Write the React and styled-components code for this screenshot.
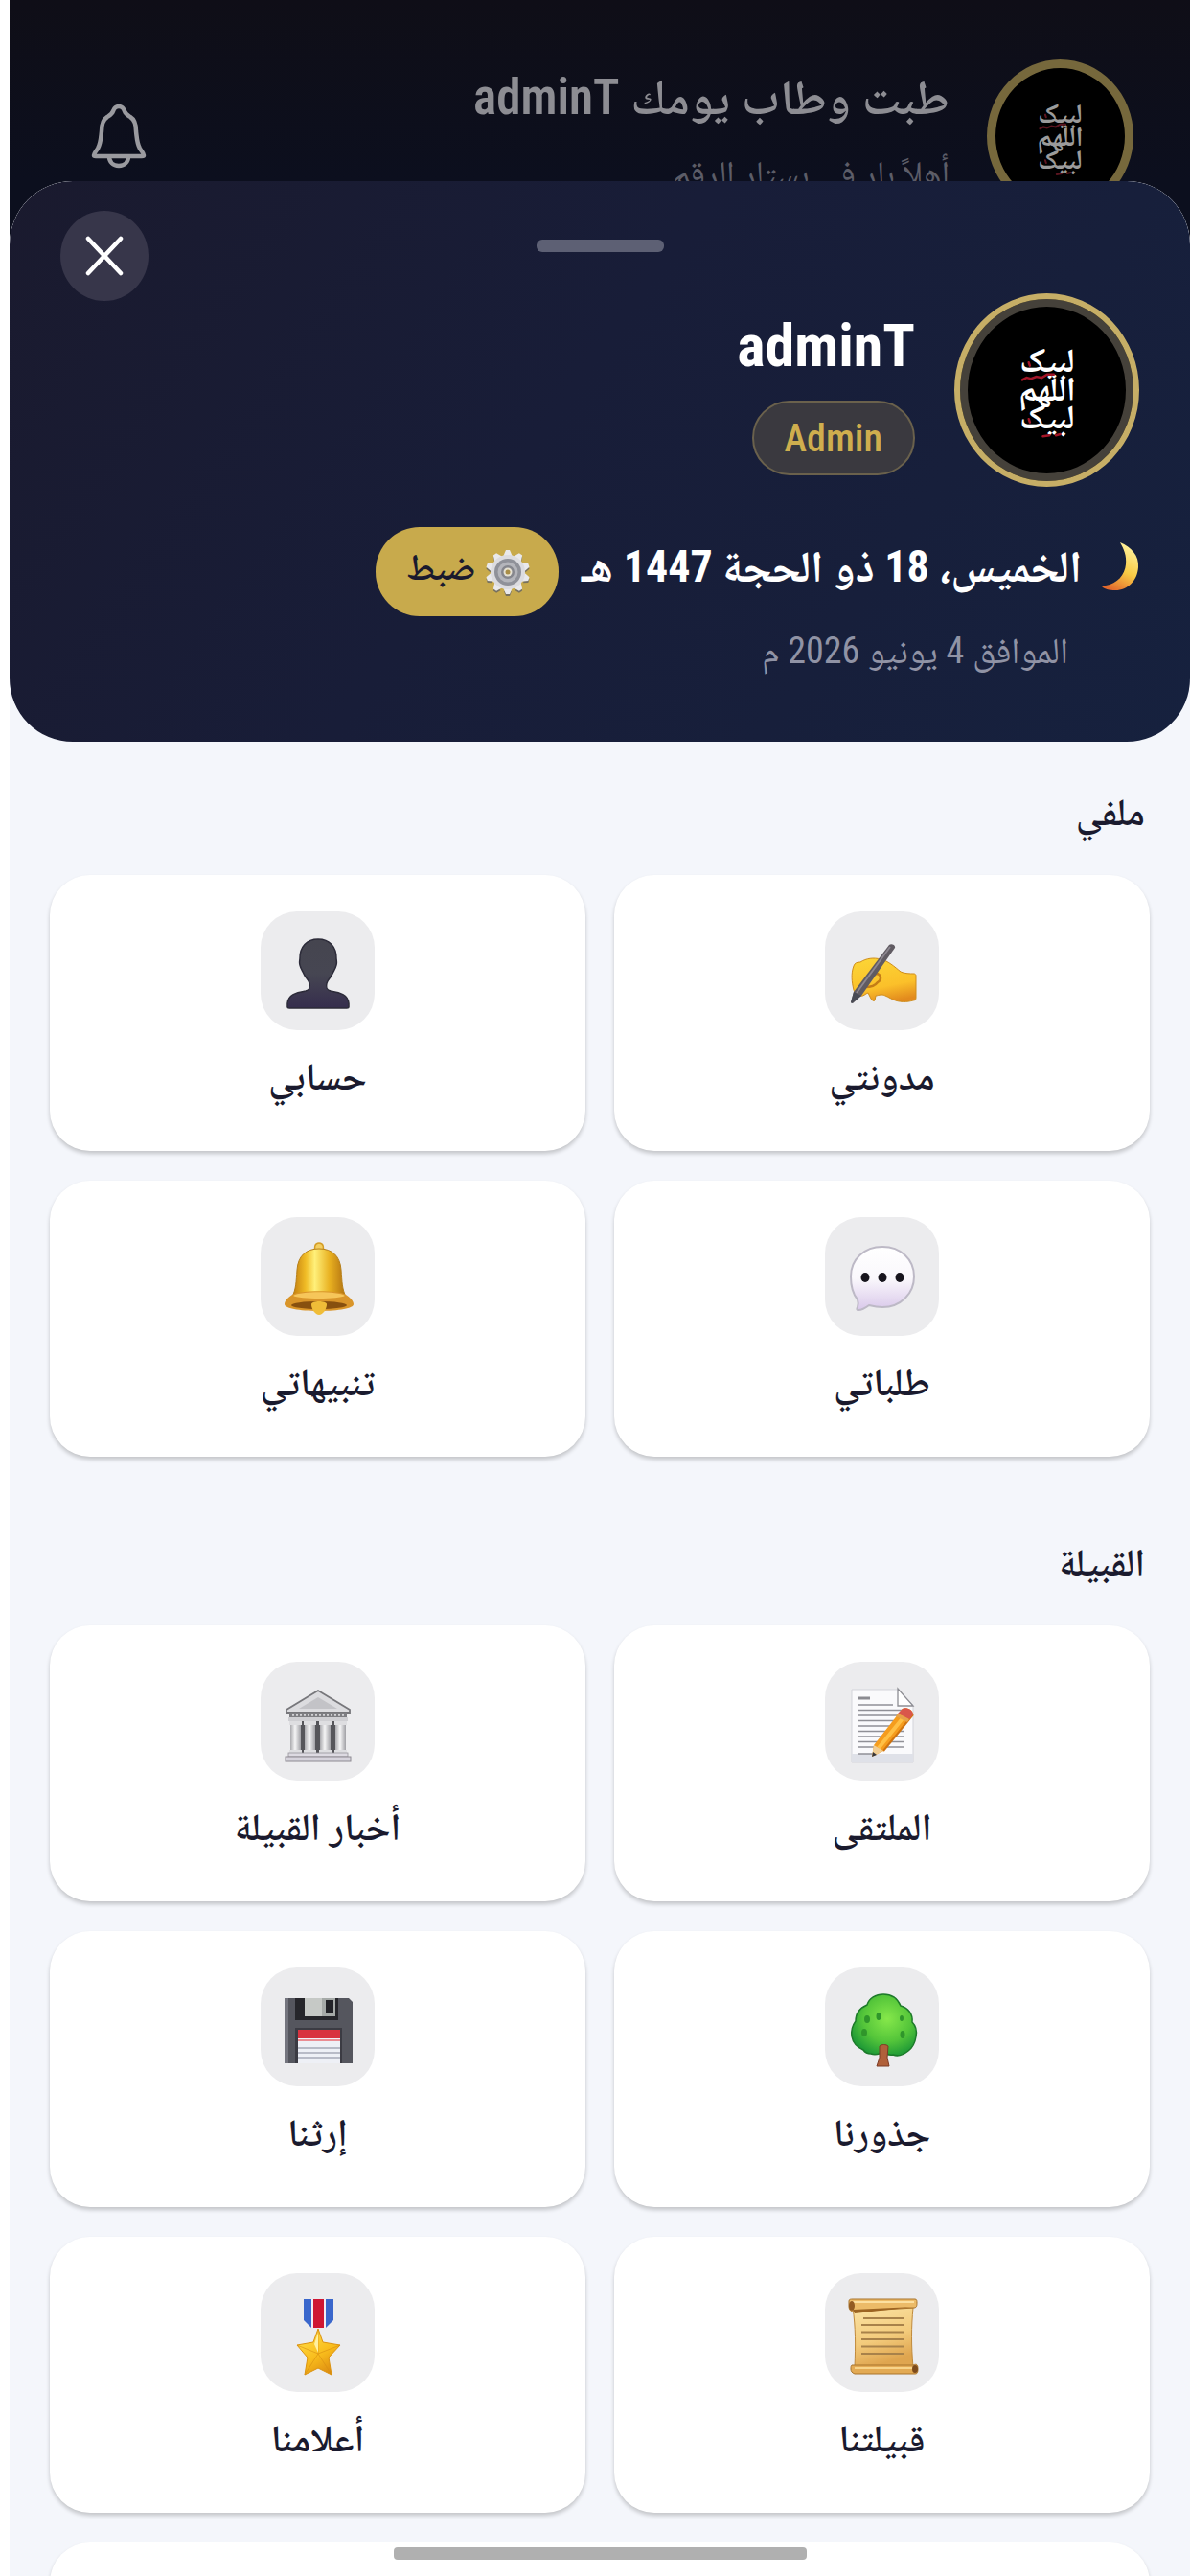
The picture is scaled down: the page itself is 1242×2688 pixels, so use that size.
import React from 'react';
import styled, { createGlobalStyle } from 'styled-components';

const GlobalStyle = createGlobalStyle`
  *, *::before, *::after { box-sizing: border-box; }
  body { margin: 0; background: #ffffff; }
  button { font: inherit; border: 0; padding: 0; cursor: pointer; }
  h1, h2, p { margin: 0; font-weight: inherit; }
  svg { display: block; flex: none; overflow: visible; }
`;

const Page = styled.main`
  height: 100vh;
  overflow: hidden;
  padding-left: 10px;
  display: flex;
  flex-direction: column;
  font-family: 'Roboto Condensed', 'Noto Naskh Arabic', 'Noto Sans', 'DejaVu Sans', sans-serif;
  color: #1a1a2e;
`;

const AppBar = styled.header`
  flex: none;
  height: 270px;
  padding: 62px 59px 0 86px;
  display: flex;
  align-items: flex-start;
  gap: 39px;
  background: linear-gradient(#0f0e17, #0c0f1e 70%);
  color: #8d8d93;
`;

const Greeting = styled.div`
  flex: 1;
  display: flex;
  flex-direction: column;
  gap: 9px;
`;

const GreetingTitle = styled.p`
  font-size: 51px;
  font-weight: 600;
  line-height: 80px;
`;

const GreetingText = styled.p`
  font-size: 36px;
  line-height: 60px;
  color: #5c5d68;
`;

const BellButton = styled.button`
  margin-top: 46px;
  background: none;
  color: #9a9a9f;
`;

const Avatar = styled.div`
  flex: none;
  width: ${(p) => (p.$large ? 193 : 153)}px;
  height: ${(p) => (p.$large ? 202 : 160)}px;
  border-radius: 50%;
  border: ${(p) => (p.$large ? '6px solid #c6ae66' : '9px solid #76683c')};
  box-shadow: ${(p) => (p.$large ? 'inset 0 0 0 8px #45413a' : 'none')};
  background: #000000;
  display: grid;
  place-items: center;
`;

const Sheet = styled.section`
  flex: 1;
  min-height: 0;
  margin-top: -81px;
  border-radius: 66px 66px 0 0;
  background: #f4f6fb;
  overflow: hidden;
`;

const Hero = styled.div`
  position: relative;
  padding: 61px 53px 64px;
  border-radius: 66px;
  background: linear-gradient(125deg, #1a1a2e, #181d38 45%, #16213e);
  color: #ffffff;
`;

const Handle = styled.div`
  width: 133px;
  height: 13px;
  margin: 0 auto 43px;
  border-radius: 6px;
  background: #5d6074;
`;

const CloseButton = styled.button`
  position: absolute;
  left: 53px;
  top: 31px;
  width: 92px;
  height: 94px;
  border-radius: 50%;
  background: #37364a;
  display: grid;
  place-items: center;
`;

const Profile = styled.div`
  display: flex;
  align-items: center;
  gap: 41px;
`;

const Identity = styled.div`
  display: flex;
  flex-direction: column;
  align-items: flex-start;
  gap: 14px;
`;

const UserName = styled.h1`
  font-size: 62px;
  font-weight: 700;
  line-height: 86px;
`;

const RoleBadge = styled.span`
  height: 78px;
  padding: 0 32px;
  border: 2px solid #6a614c;
  border-radius: 39px;
  background: #3a393f;
  color: #cfae4e;
  font-size: 40px;
  font-weight: 500;
  line-height: 76px;
`;

const DateRow = styled.div`
  margin-top: 42px;
  display: flex;
  align-items: center;
  gap: 24px;
`;

const HijriDate = styled.p`
  padding-bottom: 12px;
  display: flex;
  align-items: center;
  gap: 19px;
  font-size: 46px;
  font-weight: 700;
  line-height: 80px;
`;

const AdjustButton = styled.button`
  height: 93px;
  padding: 0 32px;
  border-radius: 46px;
  background: #c8aa4c;
  color: #1a1a2e;
  display: flex;
  align-items: center;
  gap: 12px;
  font-size: 38px;
  font-weight: 600;
  line-height: 56px;
`;

const AdjustLabel = styled.span`
  padding-bottom: 10px;
`;

const GregorianDate = styled.p`
  margin-top: 8px;
  padding-right: 74px;
  padding-bottom: 3px;
  font-size: 38px;
  line-height: 56px;
  color: #9093a5;
`;

const Section = styled.section`
  padding: ${(p) => (p.$first ? 46 : 83)}px 42px 0;
`;

const SectionTitle = styled.h2`
  padding-right: 5px;
  margin-bottom: 37px;
  font-size: 40px;
  font-weight: 600;
  line-height: 56px;
`;

const CardGrid = styled.div`
  display: grid;
  grid-template-columns: 1fr 1fr;
  gap: 31px 30px;
`;

const Card = styled.button`
  grid-column: ${(p) => (p.$wide ? '1 / -1' : 'auto')};
  min-height: 288px;
  padding: 38px 20px 49px;
  border-radius: 42px;
  background: #ffffff;
  box-shadow: 0 3px 4px rgba(0, 0, 0, 0.2);
  color: #1a1a2e;
  display: flex;
  flex-direction: column;
  align-items: center;
  gap: 21px;
  font-size: 40px;
  font-weight: 600;
  line-height: 56px;
`;

const Tile = styled.span`
  width: 119px;
  height: 124px;
  border-radius: 38px;
  background: #ececee;
  display: grid;
  place-items: center;
`;

const HomeIndicator = styled.div`
  position: fixed;
  left: 50%;
  bottom: 17px;
  width: 431px;
  height: 13px;
  margin-left: -210px;
  border-radius: 4px;
  background: #b0b0b0;
`;

const EmblemText = styled.text`
  font-family: 'Noto Naskh Arabic', 'DejaVu Sans', sans-serif;
  font-size: 31px;
  font-weight: 700;
  text-anchor: middle;
`;

function Emblem({ width, color, accent }) {
  return (
    <svg width={width} height={width * 1.4} viewBox="0 0 60 84" fill={color} aria-hidden="true">
      <EmblemText x="30" y="26">لبيک</EmblemText>
      <EmblemText x="30" y="52">اللهم</EmblemText>
      <EmblemText x="30" y="78">لبيک</EmblemText>
      <path d="M7 33l4-2 4 1 5-2 5 1 5-3 6 0M26 85l6-1M38 84l4-1M13 17l1 3M13 69l1 3" fill="none" stroke={accent} strokeWidth="2.200" strokeLinecap="round" />
    </svg>
  );
}

function BellOutline() {
  return (
    <svg width="56" height="67" viewBox="0 0 56 67" fill="none" stroke="currentColor" strokeWidth="4.500" strokeLinejoin="round" aria-hidden="true">
      <path d="M28 3c-3 0-5 2-6 5-1 3-3 4-6 6-5 3-6 8-6 15-1 9-1 13-4 18-2 3-4 5-4 7 0 1 1 1 2 1h48c1 0 2 0 2-1 0-2-2-4-4-7-3-5-3-9-4-18 0-7-1-12-6-15-3-2-5-3-6-6-1-3-3-5-6-5z" />
      <path d="M18 55c0 6 4 10 10 10s10-4 10-10" />
    </svg>
  );
}

function CloseIcon() {
  return (
    <svg width="38" height="40" viewBox="0 0 38 40" stroke="#ffffff" strokeWidth="4.500" strokeLinecap="round" aria-hidden="true">
      <path d="M2 2l34 36M36 2L2 38" />
    </svg>
  );
}

function Moon() {
  return (
    <svg width="41" height="52" viewBox="1 0 41 52" aria-hidden="true">
      <defs>
        <linearGradient id="moon" x1="0.7" y1="0" x2="0.3" y2="1">
          <stop offset="0" stopColor="#fff3a0" />
          <stop offset="0.55" stopColor="#f9cb45" />
          <stop offset="1" stopColor="#e2682c" />
        </linearGradient>
      </defs>
      <path d="M22 1c12 5 20 14 19 26-1 14-11 24-24 24-6 0-12-1-15-5 1 0 3 0 5 0 12-2 20-11 21-22 1-9-2-16-6-23z" fill="url(#moon)" />
    </svg>
  );
}

const gearTeeth = Array.from({ length: 10 }, (_, i) => i * 36);

function Gear() {
  return (
    <svg width="42" height="48" viewBox="0 0 42 48" aria-hidden="true">
      {gearTeeth.map((a) => (
        <path key={`s${a}`} d="M17 6l2-5h4l2 5z" fill="#77715f" transform={`translate(0 2) rotate(${a} 21 24)`} />
      ))}
      {gearTeeth.map((a) => (
        <path key={a} d="M16 8l3-7h4l3 7z" fill="#e9e9ec" transform={`rotate(${a} 21 24)`} />
      ))}
      <circle cx="21" cy="24" r="18" fill="#dcdce0" />
      <circle cx="21" cy="24" r="14" fill="#8f9199" />
      <circle cx="21" cy="24" r="10.500" fill="#b4b5bb" />
      <circle cx="21" cy="24" r="7" fill="#85868d" />
      <circle cx="21" cy="24" r="4.500" fill="#e6e1d2" />
      <circle cx="21" cy="24" r="2.500" fill="#a98e48" />
    </svg>
  );
}

function Glyph({ children }) {
  return (
    <svg width="80" height="88" viewBox="0 -4 80 88" aria-hidden="true">
      {children}
    </svg>
  );
}

const icons = {
  person: (
    <Glyph>
      <defs>
        <linearGradient id="bust" x1="0" y1="0" x2="0" y2="1">
          <stop offset="0" stopColor="#45454f" />
          <stop offset="0.5" stopColor="#464652" />
          <stop offset="1" stopColor="#352d4d" />
        </linearGradient>
      </defs>
      <path d="M40 7c12 0 19 8 19 20 0 2 1 4 0 7-1 4-2 5-4 9-2 5-5 6-6 10-1 5 0 7 4 8 11 2 18 4 19 13 0 2 0 3 0 4 0 1-1 1-2 1H10c-1 0-2 0-2-1 0-1 0-2 0-4 1-9 8-11 19-13 4-1 5-3 4-8-1-4-4-5-6-10-2-4-3-5-4-9-1-3 0-5 0-7C21 15 28 7 40 7z" fill="url(#bust)" stroke="#2c2b39" strokeWidth="1.500" />
    </Glyph>
  ),
  writing: (
    <Glyph>
      <defs>
        <linearGradient id="hand" x1="0.3" y1="0" x2="0.6" y2="1">
          <stop offset="0" stopColor="#fcd435" />
          <stop offset="0.65" stopColor="#fbc02a" />
          <stop offset="1" stopColor="#e28a1d" />
        </linearGradient>
      </defs>
      <path d="M10 35c1-3 3-4 7-4 6-4 14-5 21-3 7 1 15 8 21 13 4 2 10 2 14 2 1 0 2 1 2 2v23c0 2-1 3-3 3-6 2-15 2-21-1-6-3-9-5-12-5-3 0-4 1-6 1l-1 5c-1 1-3 0-4-2l-3-6c-3 1-5 4-8 3-4-1-6-3-7-6-2-8-3-17 0-25z" fill="url(#hand)" stroke="#cf8d1c" strokeWidth="1" />
      <path d="M22 57c5 0 10-1 13-5 4-2 4-7 0-9l-6 1" fill="none" stroke="#c47d16" strokeWidth="2.500" strokeLinecap="round" />
      <path d="M47 13c2-2 7 0 6 3L18 66l-9 8-2-1 3-11z" fill="#605b62" />
      <path d="M48 15L13 63" stroke="#8d8790" strokeWidth="1.800" />
      <path d="M10 62l8 4-10 8-1-1z" fill="#484a54" />
    </Glyph>
  ),
  bell: (
    <Glyph>
      <defs>
        <linearGradient id="brass" x1="0" y1="0" x2="1" y2="0">
          <stop offset="0" stopColor="#c07a0e" />
          <stop offset="0.250" stopColor="#f0bc26" />
          <stop offset="0.420" stopColor="#fff07a" />
          <stop offset="0.700" stopColor="#e8b020" />
          <stop offset="1" stopColor="#b06f10" />
        </linearGradient>
      </defs>
      <path d="M37 15c-1-5-1-10 4-10s5 5 4 10z" fill="#f3cf62" stroke="#d49d27" strokeWidth="1.500" />
      <path d="M41 11c14 0 22 8 23 22 1 13 1 20 5 28H13c4-8 4-15 5-28 1-14 9-22 23-22z" fill="url(#brass)" stroke="#b7801a" strokeWidth="1" />
      <path d="M13 59c8-5 48-5 56 0 5 3 8 7 8 10 0 4-15 7-36 7S5 73 5 69c0-3 3-7 8-10z" fill="#d9952a" />
      <path d="M14 60c8-5 46-5 54 0-6 4-48 4-54 0z" fill="#f6c65a" />
      <ellipse cx="41" cy="70" rx="29" ry="4" fill="#87500f" />
      <path d="M33 69c0-4 16-4 16 0 0 5-4 11-8 11s-8-6-8-11z" fill="#f0bd38" />
    </Glyph>
  ),
  chat: (
    <Glyph>
      <defs>
        <linearGradient id="bubble" x1="0" y1="0" x2="0" y2="1">
          <stop offset="0" stopColor="#ffffff" />
          <stop offset="0.500" stopColor="#faf8fc" />
          <stop offset="1" stopColor="#d9c8ea" />
        </linearGradient>
      </defs>
      <path d="M40 9c19 0 33 13 33 31S59 72 40 72c-6 0-10-1-14-2-4 3-7 5-11 5-2 0-2-1-1-3 1-3 1-5 0-8-5-6-7-13-7-24C7 22 21 9 40 9z" fill="url(#bubble)" stroke="#bdb9c6" strokeWidth="2" />
      <g fill="#17151d">
        <ellipse cx="22" cy="41" rx="4.500" ry="5" />
        <ellipse cx="40" cy="41" rx="4.500" ry="5" />
        <ellipse cx="58" cy="41" rx="4.500" ry="5" />
      </g>
    </Glyph>
  ),
  temple: (
    <Glyph>
      <defs>
        <linearGradient id="column" x1="0" y1="0" x2="1" y2="0">
          <stop offset="0" stopColor="#a9a9ad" />
          <stop offset="0.450" stopColor="#f5f5f6" />
          <stop offset="1" stopColor="#a0a0a5" />
        </linearGradient>
      </defs>
      <rect x="12" y="38" width="56" height="38" fill="#55555a" />
      <path d="M40 8L7 28v3h66v-3z" fill="#dcdcdf" stroke="#77777b" strokeWidth="1.800" />
      <path d="M40 15L20 27h40z" fill="#c3c3c7" />
      <rect x="10" y="31" width="60" height="5" fill="#7e7e82" />
      <path d="M13 33.500h55" stroke="#d3d3d6" strokeWidth="2.500" strokeDasharray="2 2" />
      <rect x="9" y="36" width="62" height="4" fill="#cfcfd3" />
      {[11, 26, 42, 58].map((x) => (
        <g key={x}>
          <rect x={x} y="42" width="11" height="30" fill="url(#column)" />
          <rect x={x - 1} y="40" width="13" height="4" fill="#dedee1" />
          <rect x={x - 1} y="70" width="13" height="4" fill="#dedee1" />
        </g>
      ))}
      <rect x="9" y="73" width="62" height="4" fill="#dddae2" stroke="#97949c" strokeWidth="0.800" />
      <rect x="6" y="77" width="68" height="5" fill="#d6d3dc" stroke="#8d8a92" strokeWidth="1" />
    </Glyph>
  ),
  memo: (
    <Glyph>
      <path d="M8 7h48l16 16v60H8z" fill="#fafafc" stroke="#d3d4da" strokeWidth="1" />
      <path d="M8 74h64v9H8z" fill="#dfe1e8" />
      <path d="M56 6v18h16z" fill="#ffffff" stroke="#8e8e94" strokeWidth="1.300" />
      <path d="M15 16h12" stroke="#8a8a90" strokeWidth="3" />
      <path d="M15 23h36M15 28.500h48M15 34h48M15 39.500h48M15 45h48M15 50.500h48M15 56h48M15 61.500h48M15 67h48M15 74h16" stroke="#909096" strokeWidth="1.700" />
      <path d="M60 28c2-4 12-1 12 5L41 71l-12 6 2-12z" fill="#f59c1d" />
      <path d="M66 31L36 68" stroke="#ffc045" strokeWidth="4" />
      <path d="M72 33L41 71" stroke="#d0740f" strokeWidth="2" />
      <path d="M60 28c2-4 12-1 12 5l-4 5-12-6z" fill="#d9574b" />
      <path d="M56 32l12 6-2 3-12-6z" fill="#e6a24a" />
      <path d="M31 65l10 6-12 6z" fill="#f0cd93" />
      <path d="M30 72l4 3-5 2z" fill="#35353a" />
    </Glyph>
  ),
  floppy: (
    <Glyph>
      <path d="M5 10h67l4 4v64H5z" fill="#55565e" />
      <path d="M5 10h4v68H5z" fill="#74757e" />
      <path d="M16 10h45v23H16z" fill="#26262b" />
      <path d="M26 10h32v19H26z" fill="#a6aaa8" />
      <path d="M26 10h18v19H26z" fill="#c6c9c6" />
      <rect x="48" y="12" width="8" height="14" fill="#232328" />
      <path d="M16 41h49v37H16z" fill="#3b3b43" />
      <path d="M19 43h44v35H19z" fill="#eef0f6" />
      <path d="M19 43h44v9H19z" fill="#d8323f" />
      <path d="M19 54h44" stroke="#eb8c93" strokeWidth="2" />
      <path d="M19 62h44M19 67h44M19 72h44" stroke="#a7a9b8" strokeWidth="1.500" />
    </Glyph>
  ),
  tree: (
    <Glyph>
      <defs>
        <radialGradient id="leaves" cx="0.550" cy="0.400" r="0.620">
          <stop offset="0" stopColor="#86e84a" />
          <stop offset="0.600" stopColor="#54c53a" />
          <stop offset="1" stopColor="#1f9a36" />
        </radialGradient>
      </defs>
      <path d="M41 6c9 0 15 5 18 12 8 2 13 9 12 17 4 4 5 10 4 15-1 7-4 12-8 15-5 4-11 6-16 4-4 1-7-1-11-2-4 1-7 3-12 1-3 0-6-1-8-4-7-3-11-8-12-14-1-7 1-12 4-16 0-9 5-14 12-17C26 10 33 6 41 6z" fill="url(#leaves)" stroke="#1d7a2a" strokeWidth="1.500" />
      <path d="M37 60c2-2 7-2 9 0l-1 12 2 9H34l3-9z" fill="#b0603a" stroke="#7c3a24" strokeWidth="1" />
      <g fill="#2f962b">
        <ellipse cx="24" cy="32" rx="3" ry="4" />
        <ellipse cx="36" cy="29" rx="2.500" ry="4" />
        <ellipse cx="21" cy="46" rx="3" ry="4" />
        <ellipse cx="60" cy="31" rx="2" ry="3" />
        <ellipse cx="61" cy="48" rx="2.500" ry="4" />
      </g>
    </Glyph>
  ),
  scroll: (
    <Glyph>
      <defs>
        <linearGradient id="paper" x1="0" y1="0" x2="0.300" y2="1">
          <stop offset="0" stopColor="#fbe3a4" />
          <stop offset="0.600" stopColor="#f3cb7c" />
          <stop offset="1" stopColor="#dfa54f" />
        </linearGradient>
      </defs>
      <path d="M9 14h63c-2 20-2 40 0 62H11c1-22 1-42-2-62z" fill="url(#paper)" stroke="#c08a3b" strokeWidth="1" />
      <path d="M5 7c0-2 2-2 4-2h65c2 0 2 2 2 4s0 5-3 5L10 18c-4 0-5-3-5-6z" fill="#ecbb68" stroke="#a9742c" strokeWidth="1" />
      <path d="M9 16l64-3-62 7z" fill="#9c6422" />
      <path d="M7 8h66" stroke="#fce0a0" strokeWidth="2" />
      <ellipse cx="8" cy="12" rx="3" ry="5" fill="#935b22" />
      <path d="M8 74h64c4-2 5 0 5 4s-1 5-3 5H11c-3-1-4-3-4-5s0-3 1-4z" fill="#e3aa54" stroke="#a9742c" strokeWidth="1" />
      <path d="M11 77h61" stroke="#f8d48a" strokeWidth="2" />
      <ellipse cx="74" cy="78" rx="3" ry="4" fill="#7d4b1c" />
      <path d="M20 25h42M18 32h44M18 39.500h44M18 47h44M18 54.500h44M18 62h44" stroke="#a8824a" strokeWidth="2.200" />
    </Glyph>
  ),
  medal: (
    <Glyph>
      <defs>
        <linearGradient id="star" x1="0.200" y1="0" x2="0.800" y2="1">
          <stop offset="0" stopColor="#ffe04d" />
          <stop offset="0.550" stopColor="#f9bd1c" />
          <stop offset="1" stopColor="#d9860f" />
        </linearGradient>
      </defs>
      <path d="M25 5h31v22l-8 8H33l-8-8z" fill="#3a67cc" />
      <path d="M33 5h15v30H33z" fill="#f3eef4" />
      <path d="M35 5h11v30H35z" fill="#cf1733" />
      <path d="M40 36l5 14 18 3-12 13 3 18-14-7-14 7 3-18L18 53l17-3z" fill="url(#star)" stroke="#dc930f" strokeWidth="1" strokeLinejoin="round" />
      <path d="M40 36v26L18 53M40 62l14 22M40 62l-14 22M40 62l23-9" fill="none" stroke="#d98e12" strokeWidth="1" opacity="0.600" />
      <path d="M40 40l-4 12 4 9z" fill="#fff0a0" />
    </Glyph>
  ),
};

const profileItems = [
  { icon: 'writing', label: 'مدونتي' },
  { icon: 'person', label: 'حسابي' },
  { icon: 'chat', label: 'طلباتي' },
  { icon: 'bell', label: 'تنبيهاتي' },
];

const tribeItems = [
  { icon: 'memo', label: 'الملتقى' },
  { icon: 'temple', label: 'أخبار القبيلة' },
  { icon: 'tree', label: 'جذورنا' },
  { icon: 'floppy', label: 'إرثنا' },
  { icon: 'scroll', label: 'قبيلتنا' },
  { icon: 'medal', label: 'أعلامنا' },
];

function MenuCard({ icon, label }) {
  return (
    <Card type="button">
      <Tile>{icons[icon]}</Tile>
      {label}
    </Card>
  );
}

export default function App() {
  return (
    <>
      <GlobalStyle />
      <Page dir="rtl" lang="ar">
        <AppBar>
          <Avatar>
            <Emblem width={55} color="#9b9b9b" accent="#5c1520" />
          </Avatar>
          <Greeting>
            <GreetingTitle>طبت وطاب يومك adminT</GreetingTitle>
            <GreetingText>أهلاً بار في بستار الرقم</GreetingText>
          </Greeting>
          <BellButton type="button" aria-label="التنبيهات">
            <BellOutline />
          </BellButton>
        </AppBar>
        <Sheet>
          <Hero>
            <Handle />
            <CloseButton type="button" aria-label="إغلاق">
              <CloseIcon />
            </CloseButton>
            <Profile>
              <Avatar $large>
                <Emblem width={68} color="#ffffff" accent="#a31628" />
              </Avatar>
              <Identity>
                <UserName>adminT</UserName>
                <RoleBadge>Admin</RoleBadge>
              </Identity>
            </Profile>
            <DateRow>
              <HijriDate>
                <Moon />
                <span>الخميس، 18 ذو الحجة 1447 هـ</span>
              </HijriDate>
              <AdjustButton type="button">
                <Gear />
                <AdjustLabel>ضبط</AdjustLabel>
              </AdjustButton>
            </DateRow>
            <GregorianDate>الموافق 4 يونيو 2026 م</GregorianDate>
          </Hero>
          <Section $first>
            <SectionTitle>ملفي</SectionTitle>
            <CardGrid>
              {profileItems.map((item) => (
                <MenuCard key={item.icon} {...item} />
              ))}
            </CardGrid>
          </Section>
          <Section>
            <SectionTitle>القبيلة</SectionTitle>
            <CardGrid>
              {tribeItems.map((item) => (
                <MenuCard key={item.icon} {...item} />
              ))}
              <Card as="div" $wide />
            </CardGrid>
          </Section>
        </Sheet>
        <HomeIndicator />
      </Page>
    </>
  );
}
